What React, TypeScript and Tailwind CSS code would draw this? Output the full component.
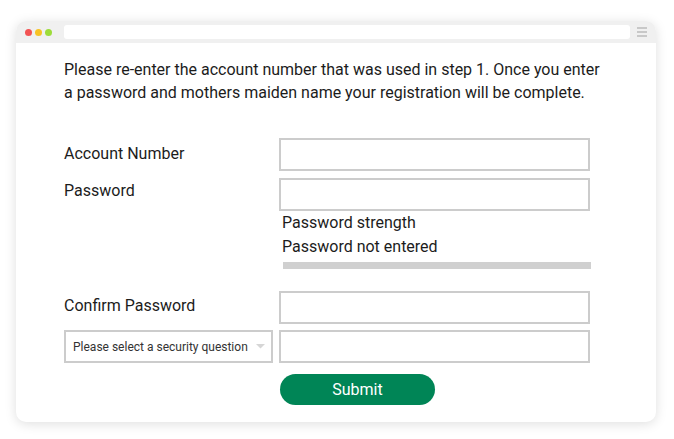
import React from "react";

export default function App() {
  const font = { fontFamily: "Roboto, 'Noto Sans', sans-serif" };
  return (
    <div className="w-[674px] h-[439px] bg-white overflow-hidden" style={font}>
      <div className="ml-[16px] mt-[21px] w-[640px] h-[401px] rounded-[10px] bg-white overflow-hidden shadow-[0_2px_12px_rgba(0,0,0,0.13)] flex flex-col">
        <div className="h-[22px] bg-[#f0f0f0] flex items-center pl-[9px] pr-[9px]">
          <div className="flex gap-[3px]">
            <span className="w-[7px] h-[7px] rounded-full bg-[#f25353]" />
            <span className="w-[7px] h-[7px] rounded-full bg-[#f7c325]" />
            <span className="w-[7px] h-[7px] rounded-full bg-[#9ddc3a]" />
          </div>
          <div className="ml-[12px] w-[567px] h-[14px] bg-white rounded-[3px]" />
          <div className="ml-[7px] flex flex-col gap-[2px]">
            <span className="w-[10px] h-[2px] bg-[#c8c8c8]" />
            <span className="w-[10px] h-[2px] bg-[#c8c8c8]" />
            <span className="w-[10px] h-[2px] bg-[#c8c8c8]" />
          </div>
        </div>
        <div className="pl-[48px] pt-[15px]">
          <p className="text-[16px] leading-[23px] text-[#1c1c1c] w-[545px]">
            Please re-enter the account number that was used in step 1. Once you enter a password and mothers maiden name your registration will be complete.
          </p>
          <div className="mt-[34px] flex flex-col">
            <div className="flex">
              <div className="w-[215px] pt-[5px] text-[16px] leading-[22px] text-[#1c1c1c]">Account Number</div>
              <div className="w-[311px] h-[33px] border-2 border-[#cccccc]" />
            </div>
            <div className="flex mt-[7px]">
              <div className="w-[215px] pt-[2px] text-[16px] leading-[22px] text-[#1c1c1c]">Password</div>
              <div className="flex flex-col">
                <div className="w-[311px] h-[33px] border-2 border-[#cccccc]" />
                <div className="pl-[3px] text-[16px] leading-[24px] text-[#1c1c1c]">Password strength</div>
                <div className="pl-[3px] text-[16px] leading-[24px] text-[#1c1c1c]">Password not entered</div>
                <div className="ml-[4px] mt-[3px] w-[308px] h-[7px] bg-[#d0d0d0]" />
              </div>
            </div>
            <div className="flex mt-[22px]">
              <div className="w-[215px] pt-[4px] text-[16px] leading-[22px] text-[#1c1c1c]">Confirm Password</div>
              <div className="w-[311px] h-[33px] border-2 border-[#cccccc]" />
            </div>
            <div className="flex mt-[6px]">
              <div className="w-[215px]">
                <div className="w-[209px] h-[33px] border-2 border-[#cccccc] flex items-center pl-[7px] pr-[6px] justify-between">
                  <span className="text-[12px] text-[#333]">Please select a security question</span>
                  <svg width="9" height="5" viewBox="0 0 9 5"><path d="M0 0 L9 0 L4.5 4.5 Z" fill="#d6d6d6" /></svg>
                </div>
              </div>
              <div className="w-[311px] h-[33px] border-2 border-[#cccccc]" />
            </div>
            <div className="flex mt-[11px]">
              <div className="w-[216px]" />
              <button className="w-[155px] h-[31px] rounded-full bg-[#008556] text-white text-[16px] leading-[31px] text-center">Submit</button>
            </div>
          </div>
        </div>
      </div>
    </div>
  );
}
